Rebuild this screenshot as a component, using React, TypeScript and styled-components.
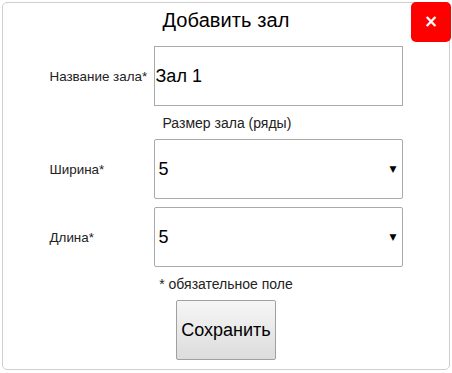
import React, { useState } from 'react';
import styled, { createGlobalStyle } from 'styled-components';

const GlobalStyle = createGlobalStyle`
  html, body {
    margin: 0;
    padding: 0;
    background: #fff;
  }
  body {
    font-family: "Liberation Sans", Arial, sans-serif;
    color: #000;
  }
`;

const opcoes = [1, 2, 3, 4, 5, 6, 7, 8, 9, 10];

const App: React.FC = () => {
    const [nome, setNome] = useState<string>('Зал 1');
    const [largura, setLargura] = useState<string>('5');
    const [comprimento, setComprimento] = useState<string>('5');

    return (
        <>
            <GlobalStyle />
            <Panel>
                <CloseButton type="button">×</CloseButton>
                <Title>Добавить зал</Title>

                <FormGrid>
                    <Label>Название зала*</Label>
                    <TextInput value={nome} onChange={e => setNome(e.target.value)} />

                    <span />
                    <SubTitle>Размер зала (ряды)</SubTitle>

                    <Label>Ширина*</Label>
                    <SelectWrap>
                        <Select value={largura} onChange={e => setLargura(e.target.value)}>
                            {opcoes.map(n => <option key={n} value={n}>{n}</option>)}
                        </Select>
                        <Arrow>▼</Arrow>
                    </SelectWrap>

                    <Label $gap>Длина*</Label>
                    <SelectWrap $gap>
                        <Select value={comprimento} onChange={e => setComprimento(e.target.value)}>
                            {opcoes.map(n => <option key={n} value={n}>{n}</option>)}
                        </Select>
                        <Arrow>▼</Arrow>
                    </SelectWrap>
                </FormGrid>

                <Hint>* обязательное поле</Hint>
                <SaveButton type="button">Сохранить</SaveButton>
            </Panel>
        </>
    );
};

// Styled Components
const Panel = styled.div`
  position: relative;
  box-sizing: border-box;
  margin: 2px 0 0 2px;
  width: 448px;
  height: 368px;
  border: 1px solid #cfcfcf;
  border-radius: 5px;
  display: flex;
  flex-direction: column;
  align-items: center;
  padding-top: 5px;
`;

const CloseButton = styled.button`
  position: absolute;
  top: -1px;
  right: -2px;
  width: 40px;
  height: 40px;
  border: none;
  border-radius: 5px;
  background: #ff0000;
  color: #fff;
  font-family: "DejaVu Sans", sans-serif;
  font-weight: bold;
  font-size: 17px;
  line-height: 1;
  padding: 0 0 1px;
  cursor: pointer;
`;

const Title = styled.h2`
  margin: 0;
  font-size: 20px;
  font-weight: normal;
  line-height: 24px;
  height: 24px;
  letter-spacing: 0.1px;
`;

const FormGrid = styled.div`
  margin-top: 14px;
  display: grid;
  grid-template-columns: 104px 249px;
  align-items: center;
`;

const Label = styled.label<{ $gap?: boolean }>`
  font-size: 13.4px;
  color: #222;
  white-space: nowrap;
  margin-top: ${p => (p.$gap ? '8px' : '0')};
`;

const TextInput = styled.input`
  box-sizing: border-box;
  width: 249px;
  height: 60px;
  border: 1px solid #a9a9a9;
  padding: 0 1px;
  font-family: "Liberation Sans", Arial, sans-serif;
  font-size: 18px;
  color: #000;
  outline: none;
`;

const SubTitle = styled.div`
  font-size: 14px;
  line-height: 20px;
  padding: 7px 0 6px 9px;
  color: #222;
`;

const SelectWrap = styled.div<{ $gap?: boolean }>`
  position: relative;
  height: 60px;
  margin-top: ${p => (p.$gap ? '8px' : '0')};
`;

const Select = styled.select`
  box-sizing: border-box;
  appearance: none;
  width: 249px;
  height: 60px;
  border: 1px solid #a9a9a9;
  border-radius: 2px;
  background: #fff;
  padding: 0 4px;
  font-family: "Liberation Sans", Arial, sans-serif;
  font-size: 18px;
  color: #000;
  outline: none;
`;

const Arrow = styled.span`
  position: absolute;
  right: 6px;
  top: 50%;
  transform: translateY(-50%);
  font-family: "DejaVu Sans", sans-serif;
  font-size: 9px;
  color: #000;
  pointer-events: none;
`;

const Hint = styled.div`
  margin-top: 7px;
  font-size: 14px;
  line-height: 20px;
  color: #222;
`;

const SaveButton = styled.button`
  margin-top: 6px;
  box-sizing: border-box;
  width: 100px;
  height: 60px;
  border: 1px solid #a0a0a0;
  border-radius: 2px;
  background: linear-gradient(to bottom, #f6f6f6, #dcdcdc);
  font-family: "Liberation Sans", Arial, sans-serif;
  font-size: 18px;
  color: #000;
  padding: 0;
  cursor: pointer;
`;

export default App;
